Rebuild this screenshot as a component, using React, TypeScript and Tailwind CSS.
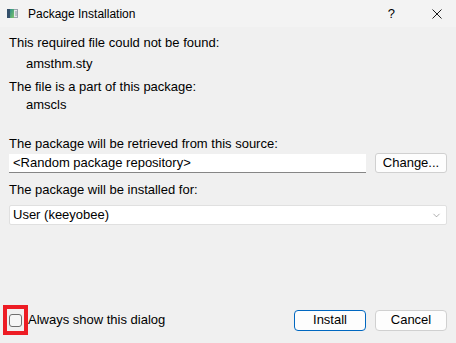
import { ChevronDown } from 'lucide-react'

export default function App() {
  return (
    <div className="w-[456px] h-[343px] bg-[#f0f0f0] flex flex-col text-[13px] leading-[16px] text-black font-['Liberation_Sans',Arial,sans-serif] overflow-hidden">
      {/* Title bar */}
      <div className="h-[27px] bg-[#f3f3f3] flex items-center shrink-0 text-[12px]">
        <svg className="ml-[7px] shrink-0" width="11" height="9" viewBox="0 0 11 9">
          <defs>
            <linearGradient id="g" x1="0" x2="1" y1="0" y2="1">
              <stop offset="0" stopColor="#2d8f8a" />
              <stop offset="1" stopColor="#7fc46a" />
            </linearGradient>
          </defs>
          <rect x="0.5" y="0.5" width="10" height="8" fill="#e6e8eb" stroke="#9aa4ae" strokeWidth="1" />
          <rect x="0" y="0" width="3" height="9" fill="#34506b" />
          <rect x="3" y="0" width="4" height="9" fill="url(#g)" />
          <rect x="8" y="2" width="2" height="5" fill="#b8c0c8" />
        </svg>
        <span className="ml-[10px]">Package Installation</span>
        <span className="ml-auto mr-[37px] text-[13px]">?</span>
        <svg className="mr-[14px] shrink-0" width="10" height="10" viewBox="0 0 10 10">
          <path d="M0.5 0.5 L9.5 9.5 M9.5 0.5 L0.5 9.5" stroke="#1a1a1a" strokeWidth="1" />
        </svg>
      </div>

      {/* Body */}
      <div className="flex flex-col flex-1 px-[9px]">
        <p className="mt-[8px]">This required file could not be found:</p>
        <p className="mt-[5px] ml-[17px]">amsthm.sty</p>
        <p className="mt-[7px]">The file is a part of this package:</p>
        <p className="mt-[2px] ml-[17px]">amscls</p>

        <p className="mt-[23px]">The package will be retrieved from this source:</p>
        <div className="mt-[1px] flex items-center gap-[9px]">
          <div className="h-[19px] w-[357px] bg-white border-b border-[#868686] flex items-center pl-[4px]">
            &lt;Random package repository&gt;
          </div>
          <button className="h-[20px] w-[72px] bg-[#fdfdfd] border border-[#d0d0d0] rounded-[3px] flex items-center justify-center">
            Change...
          </button>
        </div>

        <p className="mt-[9px]">The package will be installed for:</p>
        <div className="mt-[7px] h-[20px] w-[438px] bg-white border border-[#e0e0e0] rounded-[2px] flex items-center pl-[3px] pr-[4px]">
          <span>User (keeyobee)</span>
          <ChevronDown className="ml-auto text-[#606060]" size={11} strokeWidth={1.1} />
        </div>

        <div className="mt-auto mb-[8px] flex items-center">
          <div className="-ml-[6px] w-[25px] h-[30px] border-[4px] border-[#ed1c24] flex items-center justify-center bg-[#f0f0f0] shrink-0">
            <div className="w-[13px] h-[13px] rounded-[3px] border border-[#6f6f6f] bg-[#f6f6f6]" />
          </div>
          <span>Always show this dialog</span>
          <button className="ml-auto h-[21px] w-[72px] bg-[#fdfdfd] border border-[#0067c0] rounded-[4px] flex items-center justify-center">
            Install
          </button>
          <button className="ml-[9px] h-[21px] w-[72px] bg-[#fdfdfd] border border-[#d0d0d0] rounded-[4px] flex items-center justify-center">
            Cancel
          </button>
        </div>
      </div>
    </div>
  )
}
